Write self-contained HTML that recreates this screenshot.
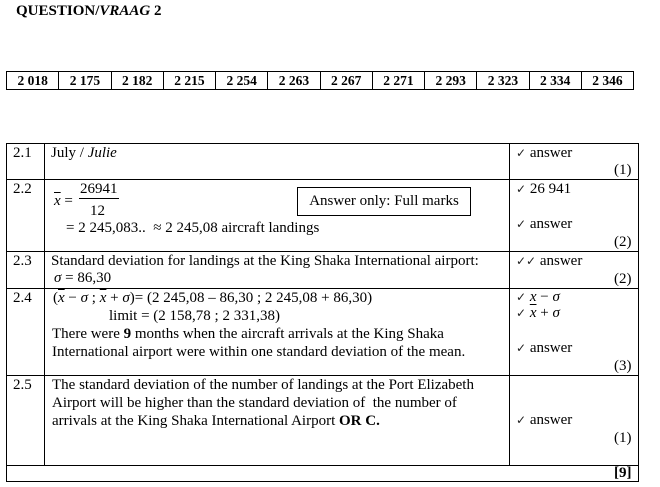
<!DOCTYPE html>
<html><head><meta charset="utf-8"><style>
body{margin:0;width:660px;height:487px;background:#fff;font-family:"Liberation Serif",serif;font-size:15px;color:#000;position:relative;overflow:hidden}
.a{position:absolute;white-space:nowrap;line-height:17px}
.h{position:absolute;background:#000;height:1px}
.v{position:absolute;background:#000;width:1px}
.ov{text-decoration:overline}
i{font-style:italic}
.ck{font-size:12px;font-family:"DejaVu Sans",sans-serif;color:#222}
</style></head><body>
<div class="a" style="left:16px;top:3px;font-weight:bold;font-size:15px">QUESTION/<i>VRAAG</i> 2</div>

<div style="position:absolute;left:6px;top:71px;width:626px;height:17px;border:1px solid #000;display:flex;font-weight:bold;font-size:13.5px;line-height:17px">
<div style="flex:1;border-right:1px solid #000;text-align:center">2 018</div>
<div style="flex:1;border-right:1px solid #000;text-align:center">2 175</div>
<div style="flex:1;border-right:1px solid #000;text-align:center">2 182</div>
<div style="flex:1;border-right:1px solid #000;text-align:center">2 215</div>
<div style="flex:1;border-right:1px solid #000;text-align:center">2 254</div>
<div style="flex:1;border-right:1px solid #000;text-align:center">2 263</div>
<div style="flex:1;border-right:1px solid #000;text-align:center">2 267</div>
<div style="flex:1;border-right:1px solid #000;text-align:center">2 271</div>
<div style="flex:1;border-right:1px solid #000;text-align:center">2 293</div>
<div style="flex:1;border-right:1px solid #000;text-align:center">2 323</div>
<div style="flex:1;border-right:1px solid #000;text-align:center">2 334</div>
<div style="flex:1;text-align:center">2 346</div>
</div>

<div class="h" style="left:6px;top:143px;width:633px"></div>
<div class="h" style="left:6px;top:179px;width:633px"></div>
<div class="h" style="left:6px;top:251px;width:633px"></div>
<div class="h" style="left:6px;top:288px;width:633px"></div>
<div class="h" style="left:6px;top:375px;width:633px"></div>
<div class="h" style="left:6px;top:465px;width:633px"></div>
<div class="h" style="left:6px;top:481px;width:633px"></div>
<div class="v" style="left:6px;top:143px;height:339px"></div>
<div class="v" style="left:44px;top:143px;height:322px"></div>
<div class="v" style="left:509px;top:143px;height:322px"></div>
<div class="v" style="left:638px;top:143px;height:339px"></div>

<div class="a" style="left:13px;top:145px">2.1</div>
<div class="a" style="left:51px;top:145px">July / <i>Julie</i></div>
<div class="a" style="left:516px;top:145px"><span class="ck">✓</span> answer</div>
<div class="a" style="left:614px;top:162px">(1)</div>

<div class="a" style="left:13px;top:181px">2.2</div>
<div class="a" style="left:54px;top:193px"><i class="ov">x</i> =</div>
<div class="a" style="left:79px;top:181px;border-bottom:1px solid #000;padding:0 1px">26941</div>
<div class="a" style="left:90px;top:203px">12</div>
<div class="a" style="left:66px;top:220px">= 2 245,083..&nbsp; ≈ 2 245,08 aircraft landings</div>
<div style="position:absolute;left:297px;top:187px;width:172px;height:27px;border:1px solid #000;text-align:center;line-height:27px">Answer only: Full marks</div>
<div class="a" style="left:516px;top:181px"><span class="ck">✓</span> 26 941</div>
<div class="a" style="left:516px;top:216px"><span class="ck">✓</span> answer</div>
<div class="a" style="left:614px;top:234px">(2)</div>

<div class="a" style="left:13px;top:253px">2.3</div>
<div class="a" style="left:51px;top:253px">Standard deviation for landings at the King Shaka International airport:</div>
<div class="a" style="left:54px;top:270px"><i>σ</i> = 86,30</div>
<div class="a" style="left:516px;top:253px"><span class="ck">✓✓</span> answer</div>
<div class="a" style="left:614px;top:271px">(2)</div>

<div class="a" style="left:13px;top:290px">2.4</div>
<div class="a" style="left:53px;top:290px">(<i class="ov">x</i> − <i>σ</i> ; <i class="ov">x</i> + <i>σ</i>)= (2 245,08 – 86,30 ; 2 245,08 + 86,30)</div>
<div class="a" style="left:109px;top:308px">limit = (2 158,78 ; 2 331,38)</div>
<div class="a" style="left:52px;top:326px">There were <b>9</b> months when the aircraft arrivals at the King Shaka</div>
<div class="a" style="left:52px;top:344px">International airport were within one standard deviation of the mean.</div>
<div class="a" style="left:516px;top:289px"><span class="ck">✓</span> <i class="ov">x</i> − <i>σ</i></div>
<div class="a" style="left:516px;top:305px"><span class="ck">✓</span> <i class="ov">x</i> + <i>σ</i></div>
<div class="a" style="left:516px;top:340px"><span class="ck">✓</span> answer</div>
<div class="a" style="left:614px;top:358px">(3)</div>

<div class="a" style="left:13px;top:377px">2.5</div>
<div class="a" style="left:52px;top:377px">The standard deviation of the number of landings at the Port Elizabeth</div>
<div class="a" style="left:52px;top:395px">Airport will be higher than the standard deviation of&nbsp; the number of</div>
<div class="a" style="left:52px;top:413px">arrivals at the King Shaka International Airport <b>OR C.</b></div>
<div class="a" style="left:516px;top:412px"><span class="ck">✓</span> answer</div>
<div class="a" style="left:614px;top:430px">(1)</div>

<div class="a" style="left:614px;top:465px;font-weight:bold">[9]</div>
</body></html>
